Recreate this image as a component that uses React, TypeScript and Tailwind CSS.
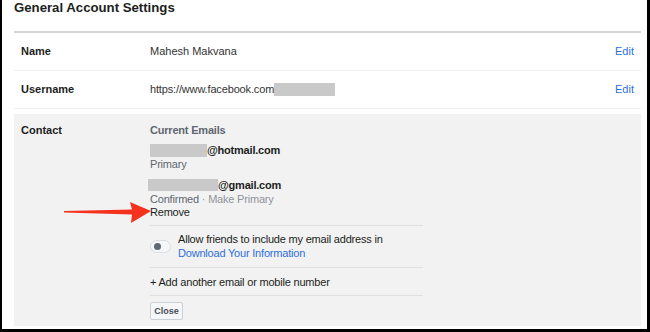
import React from "react";

function Blank({ w, h }: { w: number; h: number }) {
  return <span className="inline-block bg-[#c9c9c9]" style={{ width: w, height: h }} />;
}

export default function App() {
  return (
    <div
      className="relative w-[650px] h-[332px] bg-white border-l-2 border-r-[3px] border-b-[3px] border-black pl-[12px] pr-[6px] flex flex-col overflow-hidden"
      style={{ fontFamily: '"Liberation Sans", Arial, sans-serif' }}
    >
      <div className="h-[31px] flex items-start pt-0 text-[13.2px] leading-[16px] font-bold text-[#1c1e21]">
        General Account Settings
      </div>
      <div className="h-[2px] bg-[#d4d4d4]" />
      <div className="h-[38px] flex items-center border-b border-[#f0f0f0] text-[11px] text-[#1c1e21]">
        <div className="w-[136px] pl-[7px] font-bold">Name</div>
        <div className="flex-1 text-[#333]">Mahesh Makvana</div>
        <div className="pr-[7px] text-[#2d6fe0]">Edit</div>
      </div>
      <div className="h-[38px] flex items-center border-b border-[#f0f0f0] text-[11px] text-[#1c1e21]">
        <div className="w-[136px] pl-[7px] font-bold">Username</div>
        <div className="flex-1 flex items-center text-[#333] tracking-[-0.15px]">
          https://www.facebook.com
          <Blank w={61} h={13} />
        </div>
        <div className="pr-[7px] text-[#2d6fe0]">Edit</div>
      </div>
      <div className="mt-[5px] mb-[3px] flex-1 bg-[#f2f2f2] flex text-[11px] text-[#1c1e21]">
        <div className="w-[136px] pl-[7px] pt-[9px] font-bold leading-[14px]">Contact</div>
        <div className="w-[273px] pt-[9px] flex flex-col leading-[14px] tracking-[-0.2px]">
          <div className="font-bold text-[#606770] h-[14px]">Current Emails</div>
          <div className="mt-[6px] h-[14px] flex items-center font-bold">
            <Blank w={57} h={13} />@hotmail.com
          </div>
          <div className="h-[14px] text-[#606770]">Primary</div>
          <div className="mt-[7px] h-[14px] flex items-center font-bold -ml-[2px]">
            <Blank w={70} h={12} />@gmail.com
          </div>
          <div className="h-[14px] text-[#606770]">
            Confirmed <span className="text-[#90949c]">· Make Primary</span>
          </div>
          <div className="h-[14px] -mt-[1px]">Remove</div>
          <div className="mt-[6px] border-t border-[#dddfe2]" />
          <div className="h-[42px] flex items-center -mt-[1px]">
            <div className="relative w-[21px] h-[13px] rounded-full bg-[#f5f6f7] border border-[#dadde1] mr-[7px] shrink-0">
              <div className="absolute left-[3px] top-[2px] w-[7px] h-[7px] rounded-full bg-[#606770]" />
            </div>
            <div className="flex flex-col leading-[14px]">
              <span>Allow friends to include my email address in</span>
              <span className="text-[#2d6fe0]">Download Your Information</span>
            </div>
          </div>
          <div className="border-t border-[#dddfe2]" />
          <div className="h-[27px] flex items-center">+ Add another email or mobile number</div>
          <div className="border-t border-[#dddfe2]" />
          <div className="mt-[6px]">
            <div className="inline-flex items-center justify-center w-[33px] h-[18px] bg-[#f5f6f7] border border-[#ccd0d5] rounded-[2px] text-[9px] font-bold text-[#4b4f56] tracking-normal">
              Close
            </div>
          </div>
        </div>
      </div>
      <svg className="absolute left-0 top-0" width="650" height="332" viewBox="0 0 650 332">
        <polygon
          points="62,211 130,209.5 128,202 149,211 129,223 130,214.5 62,212.5"
          fill="#f4321e"
        />
      </svg>
    </div>
  );
}
